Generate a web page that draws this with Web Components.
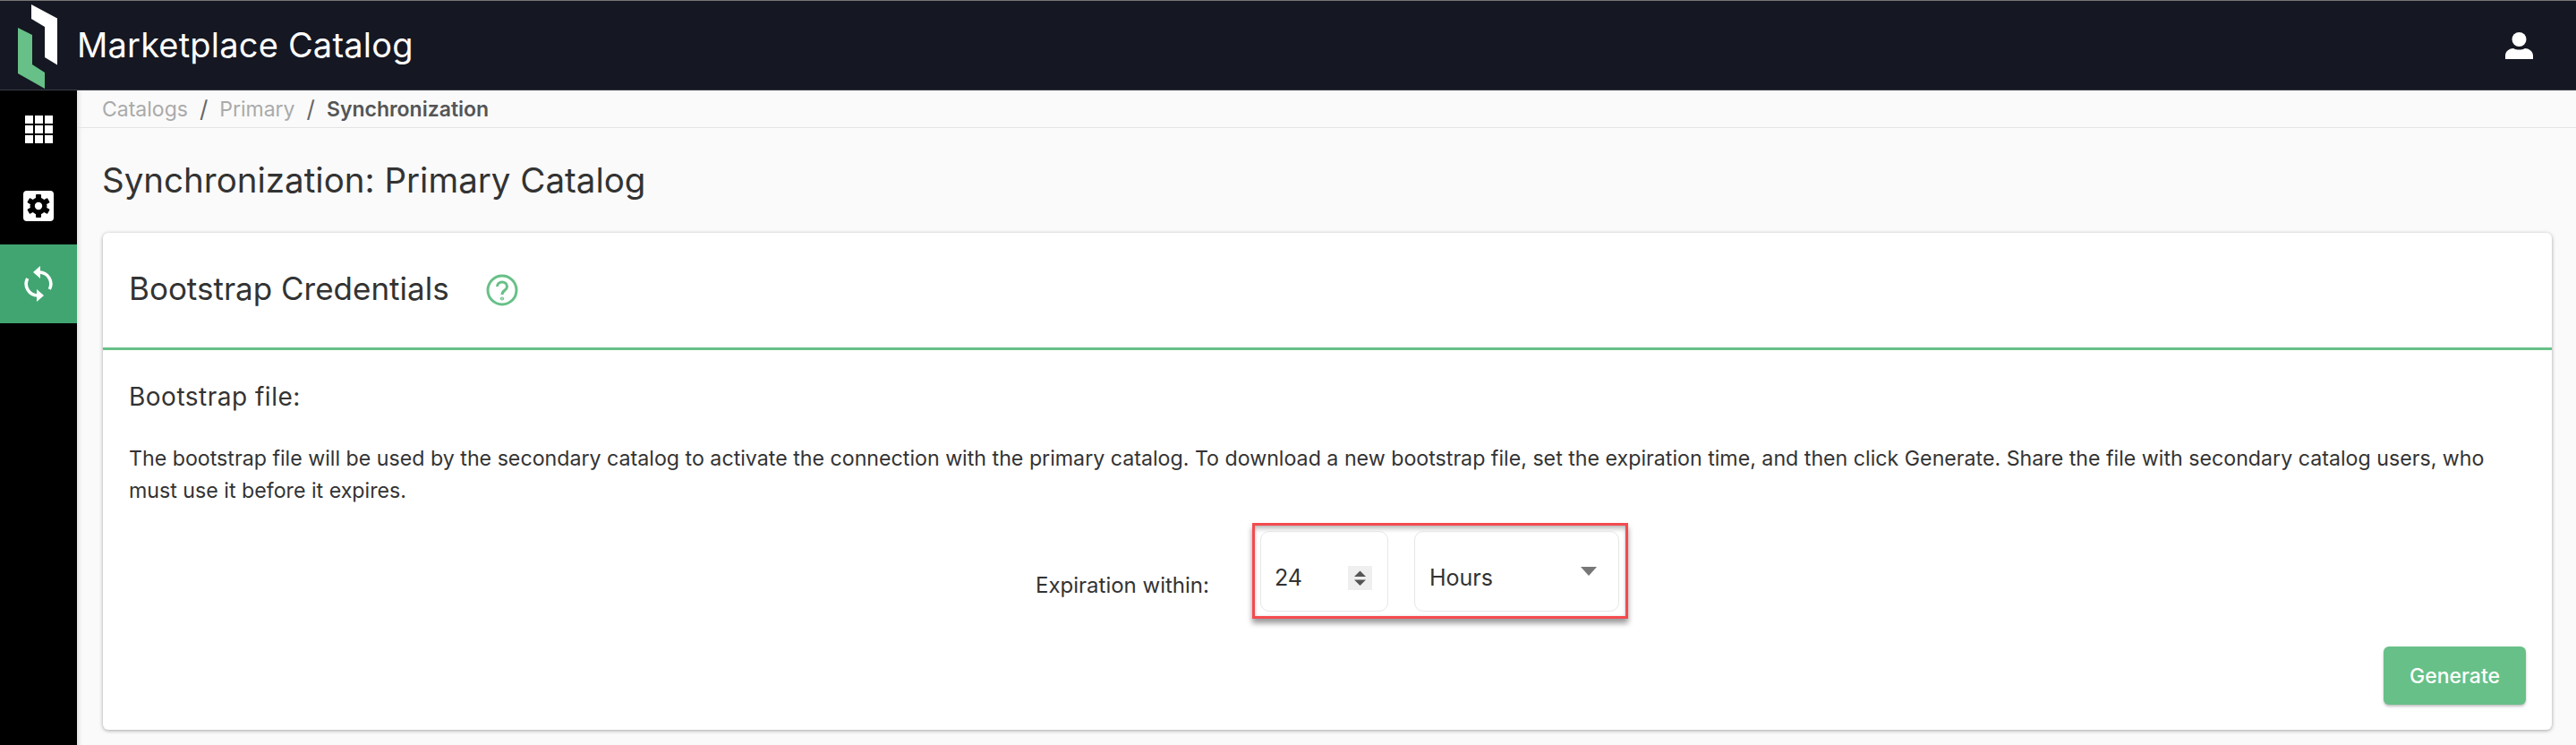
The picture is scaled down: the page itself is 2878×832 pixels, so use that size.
<!DOCTYPE html>
<html>
<head>
<meta charset="utf-8">
<title>Marketplace Catalog</title>
<style>
  html, body { margin: 0; height: 100%; background: #fafafa; overflow: hidden; }
  body { font-family: "Inter", "Noto Sans", sans-serif; color: #333; }
</style>
</head>
<body>
<app-shell>
  <app-topbar slot="top" title="Marketplace Catalog"></app-topbar>
  <app-sidenav slot="side"></app-sidenav>
  <app-breadcrumb slot="crumbs"></app-breadcrumb>
  <page-title>Synchronization: Primary Catalog</page-title>
  <credentials-card></credentials-card>
</app-shell>

<script>
class AppShell extends HTMLElement {
  constructor() {
    super();
    this.attachShadow({ mode: "open" }).innerHTML = `
      <style>
        :host { display: grid; grid-template-columns: 86px 1fr; grid-template-rows: 101px 1fr; height: 832px; }
        .top { grid-column: 1 / 3; }
        main { min-width: 0; box-shadow: inset 6px 0 5px -4px rgba(0,0,0,.12); }
        .content { padding: 0 27px 0 28px; }
      </style>
      <div class="top"><slot name="top"></slot></div>
      <slot name="side"></slot>
      <main>
        <slot name="crumbs"></slot>
        <div class="content"><slot></slot></div>
      </main>`;
  }
}

class AppTopbar extends HTMLElement {
  constructor() {
    super();
    this.attachShadow({ mode: "open" }).innerHTML = `
      <style>
        :host { display: flex; align-items: center; height: 101px; box-sizing: border-box; background: #151722; border-top: 1px solid #777; border-bottom: 1px solid #3a3c46; color: #fff; }
        .logo { margin-left: 18px; width: 46px; height: 97px; flex: none; }
        h1 { margin: 0 0 0 22px; font-size: 38px; font-weight: 400; letter-spacing: .2px; line-height: 1; padding-bottom: 1px; }
        .user { margin-left: auto; margin-right: 48px; width: 32px; height: 32px; }
      </style>
      <svg class="logo" viewBox="0 0 46 97">
        <polygon points="17,3 47,19 47,71 32,62 32,28 17,19" fill="#fff"/>
        <polygon points="2,29 18,37 18,70 32,79 32,97 2,80" fill="#67c087"/>
      </svg>
      <h1></h1>
      <svg class="user" viewBox="0 0 32 32" fill="#fff">
        <circle cx="16.500" cy="9" r="8"/>
        <path d="M1 31v-4c0-5 5-8 9-8 2 1 4 1.500 6.500 1.500s4.500-.5 6.500-1.500c4 0 9 3 9 8v4z"/>
      </svg>`;
    this.shadowRoot.querySelector("h1").textContent = this.getAttribute("title");
  }
}

class AppSidenav extends HTMLElement {
  constructor() {
    super();
    this.attachShadow({ mode: "open" }).innerHTML = `
      <style>
        :host { display: block; background: #000; }
        .item { height: 86px; display: flex; align-items: center; justify-content: center; }
        .item.active { background: #41a572; height: 88px; }
      </style>
      <div class="item">
        <svg width="31" height="31" viewBox="0 0 31 31" fill="#fff">
          <rect x="0" y="0" width="9" height="9"/><rect x="11" y="0" width="9" height="9"/><rect x="22" y="0" width="9" height="9"/>
          <rect x="0" y="11" width="9" height="9"/><rect x="11" y="11" width="9" height="9"/><rect x="22" y="11" width="9" height="9"/>
          <rect x="0" y="22" width="9" height="9"/><rect x="11" y="22" width="9" height="9"/><rect x="22" y="22" width="9" height="9"/>
        </svg>
      </div>
      <div class="item">
        <svg width="34" height="34" viewBox="0 0 34 34">
          <rect width="34" height="34" rx="4" fill="#fff"/>
          <g fill="#000" transform="translate(17 17)">
            <circle r="9.500"/>
            <rect x="-3" y="-13" width="6" height="26" rx="1"/>
            <rect x="-3" y="-13" width="6" height="26" rx="1" transform="rotate(60)"/>
            <rect x="-3" y="-13" width="6" height="26" rx="1" transform="rotate(120)"/>
            <circle r="4.200" fill="#fff"/>
          </g>
        </svg>
      </div>
      <div class="item active">
        <svg width="32" height="40" viewBox="0 0 32 40" fill="none" stroke="#fff" stroke-width="3.600">
          <path d="M17 7 A13 13 0 0 1 28.300 26"/>
          <path d="M15 33 A13 13 0 0 1 3.700 14"/>
          <path d="M18 0 L18 14 L10 7 Z" fill="#fff" stroke="none"/>
          <path d="M14 26 L14 40 L22 33 Z" fill="#fff" stroke="none"/>
        </svg>
      </div>`;
  }
}

class AppBreadcrumb extends HTMLElement {
  constructor() {
    super();
    this.attachShadow({ mode: "open" }).innerHTML = `
      <style>
        :host { display: flex; align-items: center; height: 42px; box-sizing: border-box; padding: 0 0 0 28px; border-bottom: 1px solid #e3e3e3; font-size: 23px; color: #aaa; }
        .sep { margin: 0 13px; color: #666; font-size: 26px; }
        b { color: #555; font-weight: 600; }
      </style>
      <span>Catalogs</span><span class="sep">/</span><span>Primary</span><span class="sep">/</span><b>Synchronization</b>`;
  }
}

class PageTitle extends HTMLElement {
  constructor() {
    super();
    this.attachShadow({ mode: "open" }).innerHTML = `
      <style>
        :host { display: block; height: 117px; box-sizing: border-box; padding-top: 36px; font-size: 38.500px; line-height: 44px; color: #333; }
      </style>
      <slot></slot>`;
  }
}

class CredentialsCard extends HTMLElement {
  constructor() {
    super();
    this.attachShadow({ mode: "open" }).innerHTML = `
      <style>
        :host { display: block; height: 555px; margin-left: 1px; box-sizing: border-box; background: #fff; border-radius: 6px; box-shadow: 0 1px 4px rgba(0,0,0,.35); color: #333; }
        header { display: flex; align-items: center; height: 131px; box-sizing: border-box; padding: 0 29px; border-bottom: 3px solid #67c087; }
        h2 { margin: -4px 0 0; font-size: 35px; font-weight: 400; }
        .help { margin-left: 41px; }
        .body { padding: 36px 29px 0; display: flex; flex-direction: column; }
        h3 { margin: 0; font-size: 28px; letter-spacing: .5px; font-weight: 400; line-height: 32px; }
        p { margin: 35px 0 0; font-size: 23.200px; line-height: 36px; }
        .row { display: flex; align-items: flex-start; margin: 18px 0 0 1013px; }
        label { font-size: 24px; margin-top: 58px; line-height: 24px; width: 242px; flex: none; }
        .generate { align-self: flex-end; }
      </style>
      <header>
        <h2>Bootstrap Credentials</h2>
        <svg class="help" width="36" height="36" viewBox="0 0 36 36" fill="none" stroke="#67c087" stroke-width="3">
          <circle cx="18" cy="18" r="16"/>
          <path d="M12.500 14c0-3 2.500-5 5.500-5s5.500 2 5.500 5c0 4.500-5.500 4-5.500 9"/>
          <circle cx="18" cy="27.500" r=".6" fill="#67c087"/>
        </svg>
      </header>
      <div class="body">
        <h3>Bootstrap file:</h3>
        <p>The bootstrap file will be used by the secondary catalog to activate the connection with the primary catalog. To download a new bootstrap file, set the expiration time, and then click Generate. Share the file with secondary catalog users, who must use it before it expires.</p>
        <div class="row">
          <label>Expiration within:</label>
          <highlight-box>
            <number-field value="24"></number-field>
            <select-field value="Hours"></select-field>
          </highlight-box>
        </div>
        <primary-button class="generate">Generate</primary-button>
      </div>`;
  }
}

class HighlightBox extends HTMLElement {
  constructor() {
    super();
    this.attachShadow({ mode: "open" }).innerHTML = `
      <style>
        :host { display: flex; gap: 29px; box-sizing: border-box; width: 420px; height: 107px; padding: 6px 7px 5px 6px; border: 3px solid #f44b4f; box-shadow: 0 5px 6px rgba(0,0,0,.4), inset 0 5px 5px -1px rgba(0,0,0,.22), inset 0 0 3px rgba(0,0,0,.15); }
      </style>
      <slot></slot>`;
  }
}

class NumberField extends HTMLElement {
  constructor() {
    super();
    this.attachShadow({ mode: "open" }).innerHTML = `
      <style>
        :host { display: flex; align-items: center; box-sizing: border-box; width: 143px; height: 90px; padding: 14px 17px 0 15px; border: 1px solid #e6e6e6; border-radius: 10px; font-size: 25px; color: #333; }
        span { flex: 1; }
        .spin { width: 27px; height: 27px; background: #efefef; display: flex; }
      </style>
      <span></span>
      <div class="spin">
        <svg width="27" height="27" viewBox="0 0 27 27" fill="#555">
          <polygon points="13.500,5.500 20,12 7,12"/><polygon points="13.500,22 20,15.500 7,15.500"/>
        </svg>
      </div>`;
    this.shadowRoot.querySelector("span").textContent = this.getAttribute("value");
  }
}

class SelectField extends HTMLElement {
  constructor() {
    super();
    this.attachShadow({ mode: "open" }).innerHTML = `
      <style>
        :host { display: flex; align-items: center; box-sizing: border-box; width: 229px; height: 90px; padding: 14px 24px 0 16px; border: 1px solid #e6e6e6; border-radius: 10px; font-size: 25px; color: #333; }
        span { flex: 1; }
        svg { margin-top: -14px; }
      </style>
      <span></span>
      <svg width="18" height="10" viewBox="0 0 18 10" fill="#777"><polygon points="0,0 18,0 9,10"/></svg>`;
    this.shadowRoot.querySelector("span").textContent = this.getAttribute("value");
  }
}

class PrimaryButton extends HTMLElement {
  constructor() {
    super();
    this.attachShadow({ mode: "open" }).innerHTML = `
      <style>
        :host { display: flex; align-items: center; justify-content: center; width: 159px; height: 65px; margin-top: 31px; background: #67c087; color: #fff; border-radius: 6px; font-size: 23px; font-weight: 500; box-shadow: 0 2px 3px rgba(0,0,0,.25); }
      </style>
      <slot></slot>`;
  }
}

customElements.define("app-shell", AppShell);
customElements.define("app-topbar", AppTopbar);
customElements.define("app-sidenav", AppSidenav);
customElements.define("app-breadcrumb", AppBreadcrumb);
customElements.define("page-title", PageTitle);
customElements.define("credentials-card", CredentialsCard);
customElements.define("highlight-box", HighlightBox);
customElements.define("number-field", NumberField);
customElements.define("select-field", SelectField);
customElements.define("primary-button", PrimaryButton);
</script>
</body>
</html>
